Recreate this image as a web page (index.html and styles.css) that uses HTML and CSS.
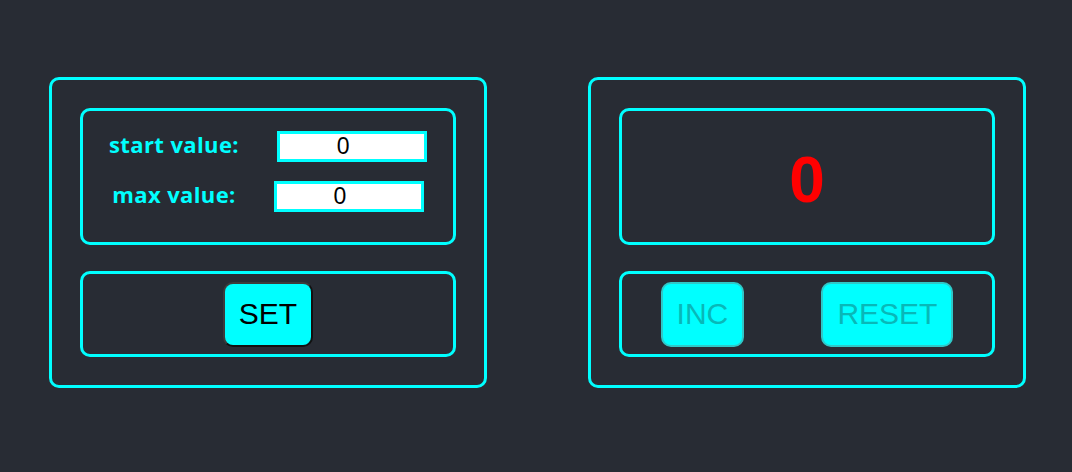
FILE: index.html
```html
<!DOCTYPE html>
<html>
  <head>
    <meta charset="UTF-8">
    <meta name="viewport" content="width=device-width, initial-scale=1.0">
    <title>Counter</title>
    <link rel="stylesheet" href="styles.css">
  </head>
  <body>
    <div class="app">
      <!-- Settings panel -->
      <div class="panel">
        <div class="box settings">
          <div class="setting-row">
            <span class="setting-label">start value:</span>
            <input class="setting-input" type="number" value="0">
          </div>
          <div class="setting-row">
            <span class="setting-label">max value:</span>
            <input class="setting-input" type="number" value="0">
          </div>
        </div>
        <div class="box controls">
          <button class="btn">SET</button>
        </div>
      </div>

      <!-- Counter panel -->
      <div class="panel">
        <div class="box display">
          <span class="count">0</span>
        </div>
        <div class="box controls">
          <button class="btn" disabled>INC</button>
          <button class="btn" disabled>RESET</button>
        </div>
      </div>
    </div>
  </body>
</html>
```

FILE: styles.css
```css
/* Base */
* {
  box-sizing: border-box;
}
body {
  margin: 0;
  background: #282c34;
  min-height: 100vh;
  font-family: 'Liberation Sans', Arial, sans-serif;
}
.app {
  display: flex;
  gap: 101px;
  padding: 77px 0 0 49px;
}
/* Panels */
.panel {
  width: 438px;
  height: 311px;
  border: 3px solid #00ffff;
  border-radius: 10px;
  padding: 28px;
  display: flex;
  flex-direction: column;
  gap: 26px;
}
.box {
  border: 3px solid #00ffff;
  border-radius: 10px;
}
/* Settings */
.settings {
  height: 137px;
  padding-top: 20px;
  display: flex;
  flex-direction: column;
  gap: 19px;
}
.setting-row {
  display: flex;
  justify-content: center;
  align-items: center;
  gap: 38px;
  height: 31px;
}
.setting-label {
  color: #00ffff;
  font-family: 'Open Sans', 'Noto Sans', sans-serif;
  font-weight: 700;
  font-size: 22px;
  letter-spacing: 0.4px;
  margin-top: -5px;
}
.setting-input {
  width: 150px;
  height: 31px;
  border: 3px solid #00ffff;
  padding: 0 18px 0 0;
  background: #fff;
  text-align: center;
  font-family: 'Liberation Sans', Arial, sans-serif;
  font-size: 23px;
  color: #000;
  outline: none;
  -moz-appearance: textfield;
}
.setting-input::-webkit-inner-spin-button,
.setting-input::-webkit-outer-spin-button {
  -webkit-appearance: none;
  margin: 0;
}
/* Counter display */
.display {
  height: 137px;
  display: flex;
  justify-content: center;
  align-items: center;
  padding-top: 6px;
}
.count {
  color: #ff0000;
  font-weight: 700;
  font-size: 64px;
}
/* Buttons */
.controls {
  height: 86px;
  display: flex;
  justify-content: space-around;
  align-items: center;
}
.controls:has(.btn:only-child) {
  justify-content: center;
}
.btn {
  background: #00ffff;
  color: #000;
  font-family: 'Liberation Sans', Arial, sans-serif;
  font-size: 30px;
  padding: 13px 14px 14px;
  border: 2px solid;
  border-color: #3c3c3c #111 #111 #3c3c3c;
  border-radius: 10px;
  cursor: pointer;
}
.btn:disabled {
  color: #08b8b8;
  border-color: #2fc8c8;
  cursor: default;
}
```
